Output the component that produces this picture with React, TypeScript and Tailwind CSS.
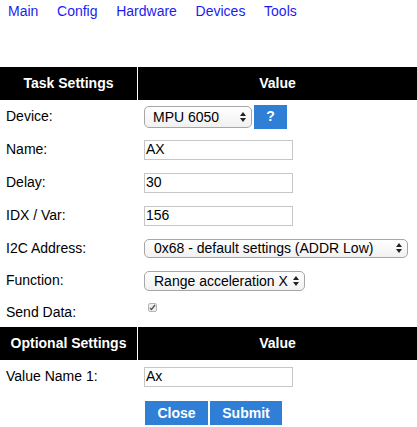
import React from "react";

const NAV = ["Main", "Config", "Hardware", "Devices", "Tools"];

// mac-style up/down select arrows
const Arrows = () => (
  <svg width="6" height="10" viewBox="0 0 6 10" className="shrink-0">
    <path d="M3 0 L6 4 L0 4 Z" fill="#222" />
    <path d="M3 10 L6 6 L0 6 Z" fill="#222" />
  </svg>
);

const Select = ({ value, className }: { value: string; className: string }) => (
  <div
    className={
      "flex items-center justify-between border border-[#a6a6a6] rounded-[5px] bg-gradient-to-b from-white to-[#f1f1f1] pl-[8px] pr-[5px] leading-none whitespace-nowrap " +
      className
    }
  >
    <span>{value}</span>
    <Arrows />
  </div>
);

const Field = ({ value }: { value: string }) => (
  <input
    readOnly
    value={value}
    className="w-[149px] h-[20px] border border-[#c6c6c6] pl-px text-[14px] outline-none font-['Liberation_Sans',Arial,sans-serif]"
  />
);

const Header = ({ left }: { left: string }) => (
  <div className="flex h-[33px] gap-px bg-white text-white font-bold">
    <div className="w-[137px] bg-black flex items-center justify-center">{left}</div>
    <div className="flex-1 bg-black flex items-center justify-center">Value</div>
  </div>
);

const Row = ({ label, h, children }: { label: string; h: string; children?: React.ReactNode }) => (
  <div className={"flex items-center " + h}>
    <div className="w-[138px] pl-[6px]">{label}</div>
    <div className="flex items-center pl-[6px]">{children}</div>
  </div>
);

export default function App() {
  return (
    <div className="w-[417px] h-[427px] overflow-hidden bg-white text-black text-[14px] font-['Liberation_Sans',Arial,sans-serif]">
      <nav className="flex gap-[18.7px] pl-2 pt-[3px] h-[67px] leading-4">
        {NAV.map((n) => (
          <a key={n} href="#" className="text-[#1c1cf0]">
            {n}
          </a>
        ))}
      </nav>

      <Header left="Task Settings" />
      <Row label="Device:" h="h-[33px]">
        <Select value="MPU 6050" className="w-[108px] h-[22px]" />
        <button className="ml-[2px] w-[33px] h-[24px] bg-[#2f7fd6] text-white font-bold">?</button>
      </Row>
      <Row label="Name:" h="h-[33px]">
        <Field value="AX" />
      </Row>
      <Row label="Delay:" h="h-[33px]">
        <Field value="30" />
      </Row>
      <Row label="IDX / Var:" h="h-[33px]">
        <Field value="156" />
      </Row>
      <Row label="I2C Address:" h="h-[32px]">
        <Select value="0x68 - default settings (ADDR Low)" className="w-[264px] h-[19px] pl-[9px]" />
      </Row>
      <Row label="Function:" h="h-[33px]">
        <Select value="Range acceleration X" className="w-[161px] h-[20px] pl-[9px]" />
      </Row>
      <Row label="Send Data:" h="h-[30px]">
        <div className="ml-[4px] -mt-[10px] w-[9px] h-[9px] border border-[#b5b5b5] rounded-[2px] bg-[#eeeeee] flex items-center justify-center">
          <svg width="7" height="7" viewBox="0 0 7 7">
            <path d="M1 4 L2.5 5.5 L6 1" stroke="#555" strokeWidth="1.4" fill="none" />
          </svg>
        </div>
      </Row>

      <Header left="Optional Settings" />
      <Row label="Value Name 1:" h="h-[33px]">
        <Field value="Ax" />
      </Row>
      <div className="flex gap-[2px] pl-[145px] pt-[8px]">
        <button className="w-[63px] h-[24px] bg-[#2f7fd6] text-white font-bold">Close</button>
        <button className="w-[72px] h-[24px] bg-[#2f7fd6] text-white font-bold">Submit</button>
      </div>
    </div>
  );
}
